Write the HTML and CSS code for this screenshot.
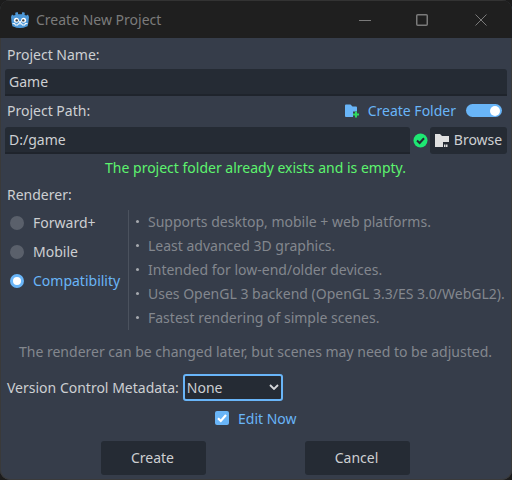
FILE: index.html
```html
<!DOCTYPE html>
<html lang="en">
  <head>
    <meta charset="UTF-8" />
    <meta name="viewport" content="width=device-width, initial-scale=1.0" />
    <title>Create New Project</title>
    <link rel="stylesheet" href="styles.css">
  </head>
  <body>
    <div class="window">
      <header class="titlebar">
        <svg class="logo" width="18" height="18" viewBox="0 0 18 18">
          <path fill="#4d98d8" d="M6.6 1 7.2 3.2 10.8 3.2 11.4 1 13.8 1.8 13.6 4 15.4 4.6 17 3.4 18 6 17.4 11.4 16.6 15.2 12.4 16.8 9 17 5.6 16.8 1.4 15.2 .6 11.4 0 6 1 3.4 2.6 4.6 4.4 4 4.2 1.8Z" />
          <circle cx="5.4" cy="9.2" r="2.5" fill="#fff" />
          <circle cx="12.6" cy="9.2" r="2.5" fill="#fff" />
          <circle cx="5.7" cy="9.4" r="1.2" fill="#414042" />
          <circle cx="12.3" cy="9.4" r="1.2" fill="#414042" />
          <rect x="8.2" y="10" width="1.6" height="2.2" fill="#fff" />
          <path fill="none" stroke="#fff" stroke-width="1" d="M1.5 12.6H4V14H7V12.8H11V14H14V12.6H16.5" />
        </svg>
        <span class="title">Create New Project</span>
        <div class="controls">
          <svg width="12" height="12" viewBox="0 0 12 12"><path d="M0 6.5H12" stroke="#7a7a7a" fill="none" /></svg>
          <svg width="12" height="12" viewBox="0 0 12 12"><rect x=".75" y=".75" width="10.5" height="10.5" rx="1" stroke="#7a7a7a" stroke-width="1.5" fill="none" /></svg>
          <svg width="12" height="12" viewBox="0 0 12 12"><path d="M.5 .5 11.5 11.5M11.5 .5 .5 11.5" stroke="#7a7a7a" fill="none" /></svg>
        </div>
      </header>

      <main class="content">
        <label class="label name-label">Project Name:</label>
        <input class="field" type="text" value="Game" />

        <div class="path-head">
          <label class="label">Project Path:</label>
          <div class="create-folder">
            <svg width="15" height="14" viewBox="0 0 15 14">
              <path fill="#69b5f8" d="M0 1.5Q0 .5 1 .5H5.5L7.5 2.5H11Q12 2.5 12 3.5V13H1Q0 13 0 12Z" />
              <path stroke="#36404d" stroke-width="6" d="M11 7.5V14" />
              <path stroke="#2fd85f" stroke-width="2" d="M11 7.5V13.5M8 10.5H14" />
            </svg>
            <span>Create Folder</span>
            <span class="toggle"><span class="knob"></span></span>
          </div>
        </div>

        <div class="path-row">
          <input class="field path-field" type="text" value="D:/game" />
          <svg class="ok" width="15" height="15" viewBox="0 0 15 15">
            <circle cx="7.5" cy="7.5" r="7" fill="#1ee873" />
            <path d="M4 7.5 6.6 10 11 5.2" stroke="#252b34" stroke-width="2" fill="none" />
          </svg>
          <button class="browse">
            <svg width="14" height="13" viewBox="0 0 14 13">
              <path fill="#e0e0e0" d="M0 0H5L7 2H14V8H8V13H0Z" />
              <path fill="#e0e0e0" d="M9 10.5h1.5V13H9ZM11 10.5h1.5V13H11Z" />
            </svg>
            Browse
          </button>
        </div>

        <p class="status">The project folder already exists and is empty.</p>

        <label class="label renderer-label">Renderer:</label>
        <div class="renderer">
          <div class="options">
            <div class="option"><span class="radio"></span>Forward+</div>
            <div class="option"><span class="radio"></span>Mobile</div>
            <div class="option selected"><span class="radio"></span>Compatibility</div>
          </div>
          <ul class="features">
            <li>Supports desktop, mobile + web platforms.</li>
            <li>Least advanced 3D graphics.</li>
            <li>Intended for low-end/older devices.</li>
            <li>Uses OpenGL 3 backend (OpenGL 3.3/ES 3.0/WebGL2).</li>
            <li>Fastest rendering of simple scenes.</li>
          </ul>
        </div>

        <p class="note">The renderer can be changed later, but scenes may need to be adjusted.</p>

        <div class="vcs">
          <label class="label">Version Control Metadata:</label>
          <div class="vcs-wrap">
            <select class="vcs-select">
              <option>None</option>
              <option>Git</option>
            </select>
            <svg class="chevron" width="10" height="6" viewBox="0 0 10 6"><path d="M1 1 5 5 9 1" stroke="#d6d7da" stroke-width="1.8" fill="none" /></svg>
          </div>
        </div>

        <div class="edit-now">
          <span class="check">
            <svg width="14" height="14" viewBox="0 0 14 14"><path d="M3 7.2 5.8 10 11 4" stroke="#fff" stroke-width="2.2" fill="none" /></svg>
          </span>
          Edit Now
        </div>

        <div class="actions">
          <button class="action">Create</button>
          <button class="action">Cancel</button>
        </div>
      </main>
    </div>
  </body>
</html>
```

FILE: styles.css
```css
* {
  box-sizing: border-box;
}
html,
body {
  margin: 0;
  height: 100%;
  background: #1c1c1c;
}
body {
  font-family: "Noto Sans", sans-serif;
  font-size: 14px;
  color: #cdcfd2;
}
.window {
  width: 512px;
  height: 480px;
  display: flex;
  flex-direction: column;
  background: #363d4a;
  border-radius: 10px;
  overflow: hidden;
  box-shadow: inset 0 0 0 1px #3a3a3a;
}
.titlebar {
  height: 38px;
  flex: none;
  display: flex;
  align-items: center;
  padding: 0 25px 0 11px;
  background: #1f1f1f;
  border-top: 1px solid #333;
}
.logo {
  margin-right: 7px;
}
.title {
  color: #7b7b7b;
}
.controls {
  margin-left: auto;
  display: flex;
  gap: 46px;
}
.controls svg:nth-child(2) {
  margin-left: -1px;
  margin-right: 1px;
}
.content {
  flex: 1;
  padding: 0 5px;
  display: flex;
  flex-direction: column;
}
.label {
  padding-left: 2px;
  line-height: 19px;
}
.name-label {
  margin-top: 7px;
  margin-bottom: 5px;
}
.field {
  display: block;
  width: 100%;
  height: 27px;
  padding: 0 4px;
  border: none;
  border-bottom: 2px solid #1f242c;
  border-radius: 3px 3px 0 0;
  background: #252b34;
  color: #cdcfd2;
  font: inherit;
  outline: none;
}
.path-head {
  display: flex;
  justify-content: space-between;
  align-items: center;
  height: 31px;
  padding-bottom: 2px;
}
.create-folder {
  display: flex;
  align-items: center;
  color: #69b5f8;
  padding-right: 5px;
}
.create-folder svg {
  margin-right: 8px;
}
.toggle {
  width: 36px;
  height: 13px;
  margin-left: 10px;
  border-radius: 7px;
  background: #69b5f8;
  display: flex;
  justify-content: flex-end;
  align-items: center;
  padding-right: 2px;
}
.knob {
  width: 10px;
  height: 10px;
  border-radius: 50%;
  background: #fff;
}
.path-row {
  display: flex;
  align-items: center;
}
.path-field {
  width: 405px;
}
.ok {
  margin: 0 2px 0 3px;
}
.browse {
  width: 77px;
  height: 27px;
  padding: 0 0 2px;
  border: none;
  border-radius: 3px;
  background: #252b34;
  color: #cdcfd2;
  font: inherit;
  display: flex;
  align-items: center;
  justify-content: center;
  gap: 5px;
}
.browse svg {
  margin-top: 2px;
}
.status {
  margin: 4px 1px 0 0;
  line-height: 20px;
  text-align: center;
  color: #5df46e;
}
.renderer-label {
  margin-top: 7px;
}
.renderer {
  display: flex;
  margin-top: 6px;
}
.options {
  width: 123px;
  flex: none;
  margin-top: -2px;
  padding-left: 5px;
}
.option {
  height: 29px;
  display: flex;
  align-items: center;
  gap: 9px;
}
.radio {
  width: 14px;
  height: 14px;
  border-radius: 50%;
  background: #5a606b;
}
.selected {
  color: #69b5f8;
}
.selected .radio {
  background: #fff;
  border: 3px solid #69b5f8;
}
.features {
  margin: 0;
  padding: 0 0 0 19px;
  border-left: 1px solid #4b525e;
  list-style: none;
  color: #83878e;
}
.features li {
  position: relative;
  height: 24px;
  line-height: 24px;
}
.features li::before {
  content: "";
  position: absolute;
  left: -12px;
  top: 10px;
  width: 3px;
  height: 3px;
  border-radius: 50%;
  background: #a6a9ae;
}
.note {
  margin: 12px 1px 0 0;
  line-height: 20px;
  text-align: center;
  color: #83878e;
}
.vcs {
  margin-top: 12px;
  display: flex;
  align-items: center;
  gap: 4px;
}
.vcs-wrap {
  position: relative;
  display: flex;
}
.vcs-select {
  appearance: none;
  width: 100px;
  height: 27px;
  padding: 0 2px;
  border: 2px solid #69b5f8;
  border-radius: 3px;
  background: #252b34;
  color: #cdcfd2;
  font: inherit;
  outline: none;
}
.chevron {
  position: absolute;
  right: 4px;
  top: 10px;
  pointer-events: none;
}
.edit-now {
  margin: 10px 0 0 210px;
  height: 14px;
  display: flex;
  align-items: center;
  color: #69b5f8;
}
.check {
  width: 14px;
  height: 14px;
  margin-right: 9px;
  border-radius: 2px;
  background: #69b5f8;
}
.check svg {
  display: block;
}
.actions {
  margin-top: 16px;
  padding-right: 2px;
  display: flex;
  justify-content: center;
  gap: 99px;
}
.action {
  width: 105px;
  height: 34px;
  padding: 0 1px 2px 0;
  border: none;
  border-radius: 3px;
  background: #252b34;
  color: #cdcfd2;
  font: inherit;
}
```
